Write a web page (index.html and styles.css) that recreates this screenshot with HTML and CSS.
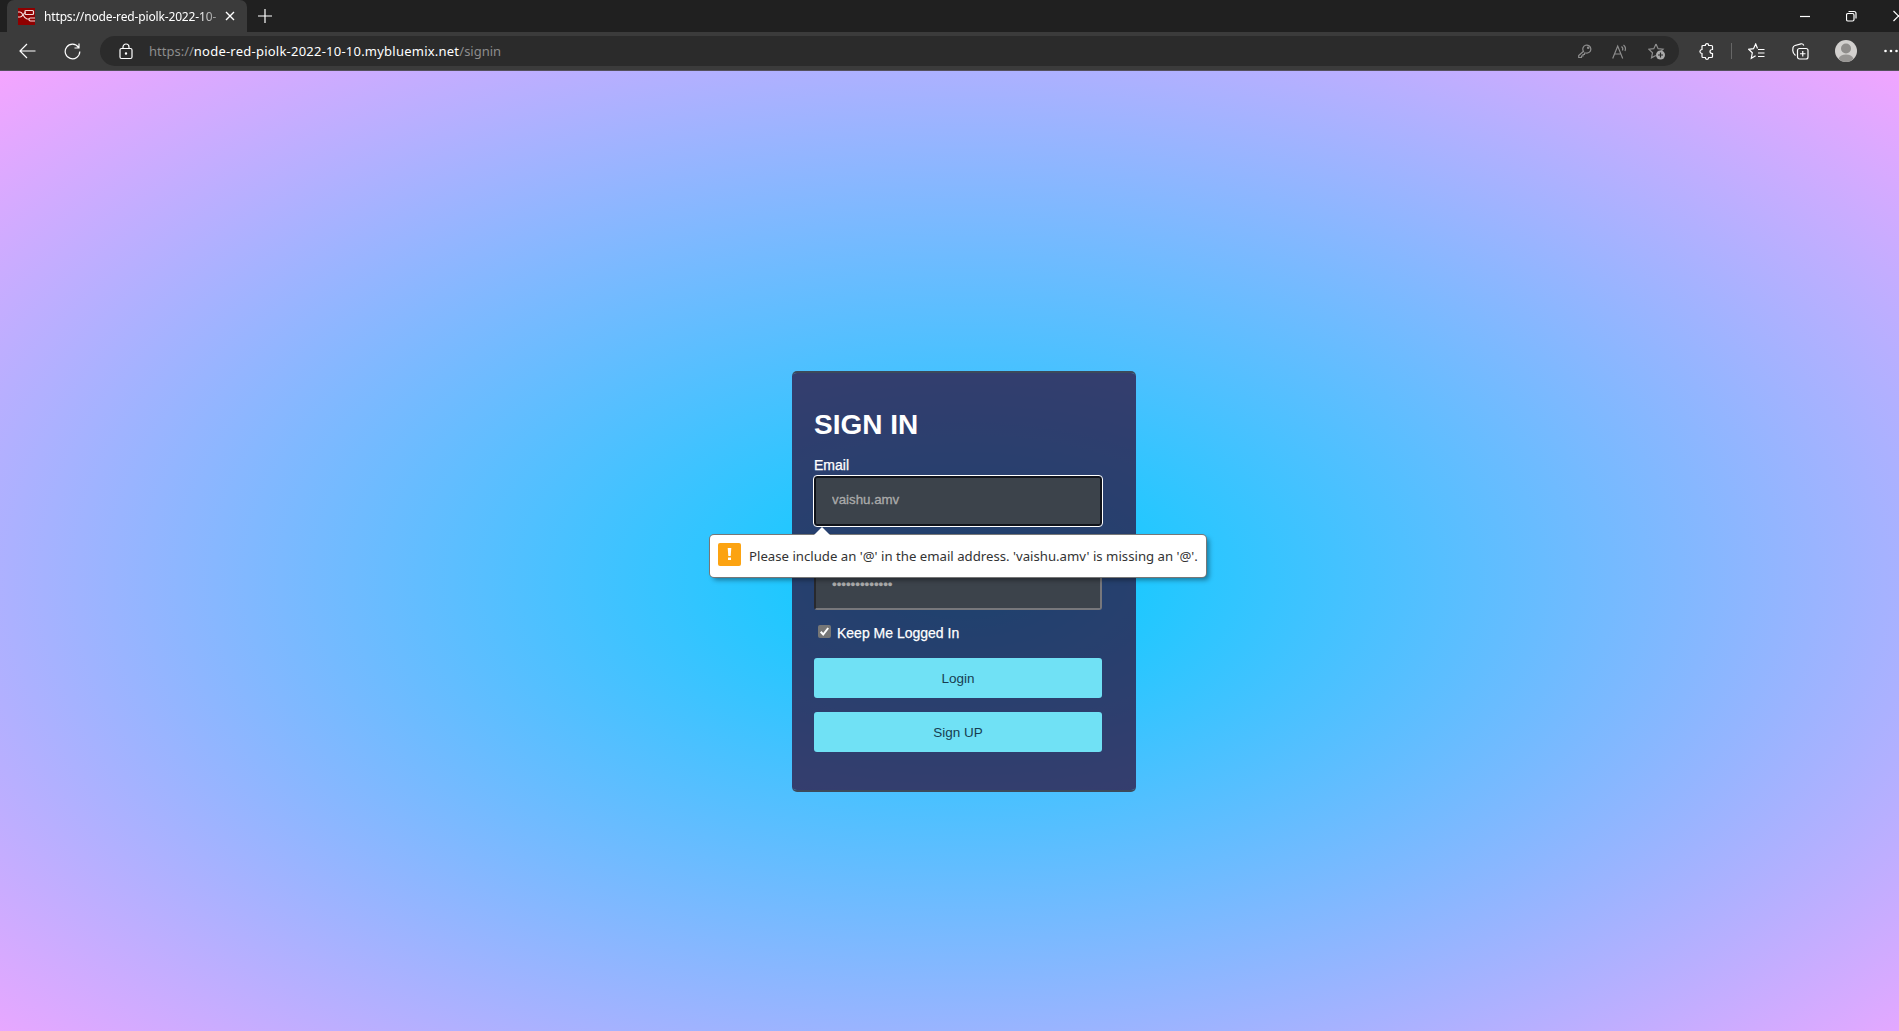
FILE: index.html
```html
<!DOCTYPE html>
<html lang="en">
<head>
<meta charset="utf-8">
<title>Sign in</title>
<link rel="stylesheet" href="styles.css">
</head>
<body>
<header class="browser">
  <div class="tabs">
    <div class="tab">
      <svg class="favicon" viewBox="0 0 17 17"><rect width="17" height="17" fill="#8f0000"/><g fill="none" stroke="#f4dada" stroke-width="1.2"><path d="M0 4h2c3 0 3 6 7 7h2M0 9h2c3 0 3-4.500 6-4.500"/><rect x="7" y="2.500" width="8.500" height="4" rx="1"/><path d="M17 10h-4.500q-1.500 0-1.500 1.500t1.500 1.500H17"/></g></svg>
      <span class="tab-title">https://node-red-piolk-2022-10-</span>
      <svg class="tab-close" viewBox="0 0 10 10"><path d="M1 1l8 8M9 1L1 9"/></svg>
    </div>
    <svg class="new-tab" viewBox="0 0 14 14"><path d="M7 0v14M0 7h14"/></svg>
    <div class="window-controls">
      <svg width="10" height="12" viewBox="0 0 10 12"><path d="M0 6.500h10"/></svg>
      <svg width="11" height="12" viewBox="0 0 11 12"><rect x=".5" y="3.500" width="7.500" height="7.500" rx="1.500"/><path d="M2.500 1.500h5.500q2 0 2 2v5"/></svg>
      <svg width="11" height="12" viewBox="0 0 11 12"><path d="M.5 1l10 10M10.500 1l-10 10"/></svg>
    </div>
  </div>
  <div class="toolbar">
    <svg class="back" width="17" height="16" viewBox="0 0 17 16"><path d="M16.500 8H1M8 1L1 8l7 7"/></svg>
    <svg class="reload" width="17" height="17" viewBox="0 0 17 17"><path d="M14.500 4.300A7.300 7.300 0 1 0 15.800 8.500M15 .5v4.500h-4.500"/></svg>
    <div class="address">
      <svg class="lock" width="14" height="17" viewBox="0 0 14 17"><rect x="1" y="5.500" width="12" height="10" rx="1.500"/><path d="M4 5.500V4a3 3 0 0 1 6 0v1.500"/><circle cx="7" cy="10.500" r=".6" fill="#fff"/></svg>
      <span class="url">https://<b>node-red-piolk-2022-10-10.mybluemix.net</b>/signin</span>
      <div class="address-icons">
        <svg width="14" height="14" viewBox="0 0 14 14"><path d="M5.500 7.300A4 4 0 1 1 8 9L6.500 9v1.500H5V12H3.500v1.500H.7v-2z"/><circle cx="10.200" cy="3.800" r=".7"/></svg>
        <svg width="16" height="15" viewBox="0 0 16 15"><path d="M.7 14.500L5.700 2l5 12.500M2.500 10h6.500M9.500 2.500q2 1.500 1 4M11.500 1q3 2.500 1.500 6"/></svg>
        <svg width="18" height="17" viewBox="0 0 18 17"><path d="M8 1l2.100 4.700 5 .5-3.700 3.400M7.800 12.500l-4.300 2.300 1-5L.8 6.200l5-.5L8 1"/><circle cx="12.500" cy="12" r="4.500" fill="#aaa" stroke="none"/><path d="M12.500 9.500v5M10 12h5" stroke="#2b2b2b"/></svg>
      </div>
    </div>
    <div class="actions">
      <svg width="16" height="17" viewBox="0 0 16 17"><path d="M4 2.500H6.300Q6.300.7 8 .7T9.700 2.500H12.500q1 0 1 1V6.500q-2.500 0-2.500 2t2.500 2v3q0 1-1 1H9.700q0 1.800-1.700 1.800T6.300 14.500H4q-1 0-1-1v-3Q.9 10.300.9 8.500T3 6.500v-3q0-1 1-1z"/></svg>
      <i class="divider"></i>
      <svg width="17" height="17" viewBox="0 0 17 17"><path d="M9.500 5.500L7.700 1 5.500 5.700l-4.800.6L4.300 9.800l-1 5.400L7.600 12.700M10 6.500h6.500M10 10h6.500M10 13.500h6.500"/></svg>
      <svg width="17" height="17" viewBox="0 0 17 17"><rect x="5.500" y="5.500" width="10.500" height="10.500" rx="2"/><path d="M10.750 8v5.500M8 10.750h5.500M3.500 12.500Q.5 10 .8 7L1 4.500Q1.500 3 3 2.500L9 .8q2-.3 2.800 1.700"/></svg>
      <svg width="22" height="22" viewBox="0 0 22 22" class="avatar"><circle cx="11" cy="11" r="11" fill="#d2d0ce"/><circle cx="11" cy="8.500" r="5" fill="#8f8d8b"/><path d="M3.500 18.500q2-4 7.500-4t7.500 4Q15.500 22 11 22t-7.500-3.500z" fill="#979593"/></svg>
      <svg width="14" height="4" viewBox="0 0 14 4" class="dots"><circle cx="1.500" cy="2" r="1.300"/><circle cx="7" cy="2" r="1.300"/><circle cx="12.500" cy="2" r="1.300"/></svg>
    </div>
  </div>
</header>
<main class="page">
  <form class="card" novalidate>
    <h1>SIGN IN</h1>
    <label for="email">Email</label>
    <div class="field email-field">
      <input class="focused" id="email" type="text" value="vaishu.amv">
      <div class="bubble"><svg width="23" height="23" viewBox="0 0 23 23"><rect width="23" height="23" rx="2" fill="#fca311"/><path d="M9.700 5h3.600l-.6 8h-2.400zM10 14.500h3v2.600h-3z" fill="#fff"/></svg><span>Please include an '@' in the email address. 'vaishu.amv' is missing an '@'.</span></div>
    </div>
    <div class="field"><div class="password">•••••••••••••</div></div>
    <div class="remember"><span class="check"><svg width="13" height="13" viewBox="0 0 13 13"><path d="M2.700 6.800l2.500 2.700 5-6.500"/></svg></span>Keep Me Logged In</div>
    <button type="button">Login</button>
    <button type="button">Sign UP</button>
  </form>
</main>
</body>
</html>
```
FILE: styles.css
```css
* { box-sizing: border-box; }
html { overflow: hidden; }
body { margin: 0; width: 1899px; height: 1031px; overflow: hidden; font-family: "Liberation Sans", Arial, sans-serif; }
svg { flex: none; fill: none; stroke: #fff; stroke-width: 1.2; }
.browser { height: 71px; background: #3b3b3b; font-family: "Noto Sans", "Open Sans", sans-serif; border-bottom: 1px solid #54505c; overflow: hidden; }
.tabs { width: 1928px; height: 32px; background: #202020; display: flex; align-items: flex-start; padding-left: 7px; }
.tab { width: 240px; height: 32px; background: #3b3b3b; border-radius: 7px 7px 0 0; display: flex; align-items: center; padding-left: 11px; }
.favicon { width: 17px; height: 17px; stroke: none; }
.tab-title { width: 176px; margin-left: 9px; font-size: 12px; letter-spacing: -.15px; white-space: nowrap; color: #fff; -webkit-mask-image: linear-gradient(to right, #000 88%, #0004); mask-image: linear-gradient(to right, #000 88%, #0004); }
.tab-close { width: 10px; height: 10px; margin-left: 5px; stroke-width: 1.4; }
.new-tab { width: 14px; height: 14px; margin: 9px 0 0 11px; }
.window-controls { margin-left: auto; display: flex; gap: 36px; padding: 10px 24px 0 0; }
.toolbar { width: 1928px; height: 38px; display: flex; align-items: center; }
.back { margin-left: 19px; }
.reload { margin-left: 28px; }
.address { margin-left: 19px; width: 1579px; height: 30px; border-radius: 15px; background: #2b2b2b; display: flex; align-items: center; padding: 0 13px 0 19px; }
.url { margin-left: 16px; font-size: 13px; color: #8d8d8d; white-space: nowrap; }
.url b { color: #fff; font-weight: 400; letter-spacing: .23px; }
.address-icons { margin-left: auto; display: flex; align-items: center; gap: 20px; }
.address-icons svg { stroke: #8d8d8d; }
.actions { display: flex; align-items: center; padding-left: 20px; }
.divider { width: 1px; height: 16px; background: #666; margin: 0 16px; }
.actions svg + svg { margin-left: 27px; }
.actions svg.avatar { stroke: none; margin-left: 26px; }
.actions .dots { fill: #fff; stroke: none; }
.page { height: 960px; display: flex; align-items: flex-start; padding: 300px 0 0 792px; background: radial-gradient(#00cdff, #f5a5ff) 0 -1px / 1928px 1020px no-repeat; }
.card { width: 344px; height: 421px; border: solid #3c4a5c; border-width: 2px 0; border-radius: 5px; padding: 36px 34px 0 22px; background: rgba(43, 6, 48, .7); background-clip: padding-box; color: #fff; }
h1 { font-size: 28px; line-height: 32px; margin: 0 0 16px; }
label { display: block; font-size: 14px; line-height: 16px; margin-bottom: 3px; -webkit-text-stroke: .25px; }
.field { position: relative; height: 50px; margin-bottom: 13px; }
.email-field { margin-bottom: 34px; }
input, .password { width: 288px; height: 50px; margin: 0; border: 2px solid; border-radius: 3px; padding: 0 16px; background: #3c434b; color: #aaa; font: 13.3px "Liberation Sans", Arial, sans-serif; -webkit-text-stroke: .3px; }
.focused { border-color: #10131a; outline: 1px solid #fff; padding-bottom: 3px; }
.password { border-color: #28292d #77777b #77777b #28292d; line-height: 45px; }
.bubble { position: absolute; z-index: 1; left: -104px; top: 59px; width: 496px; height: 42px; display: flex; align-items: center; padding-left: 8px; background: #fff; border-radius: 4px; box-shadow: 0 0 0 1px #777, 3px 3px 5px #0006; color: #333; font: 13.2px "Noto Sans", sans-serif; white-space: nowrap; }
.bubble::before { content: ""; position: absolute; left: 104px; top: -8px; border: solid transparent; border-width: 0 8px 8px; border-bottom-color: #fff; }
.bubble svg { stroke: none; margin-top: -4px; }
.bubble span { margin: -1px 0 0 8px; }
.remember { display: flex; align-items: center; height: 20px; padding-left: 4px; font-size: 14px; -webkit-text-stroke: .25px; }
.check { width: 13px; height: 13px; background: #767676; border-radius: 2px; margin: -3px 6px 0 0; }
.check svg { display: block; stroke-width: 2; }
button { display: block; width: 288px; height: 40px; margin: 14px 0 0; padding: 1px 0 0; border: 0; border-radius: 3px; background: #70e1f5; color: #173d50; font: 13.5px "Liberation Sans", Arial, sans-serif; }
.remember + button { margin-top: 15px; }
```
